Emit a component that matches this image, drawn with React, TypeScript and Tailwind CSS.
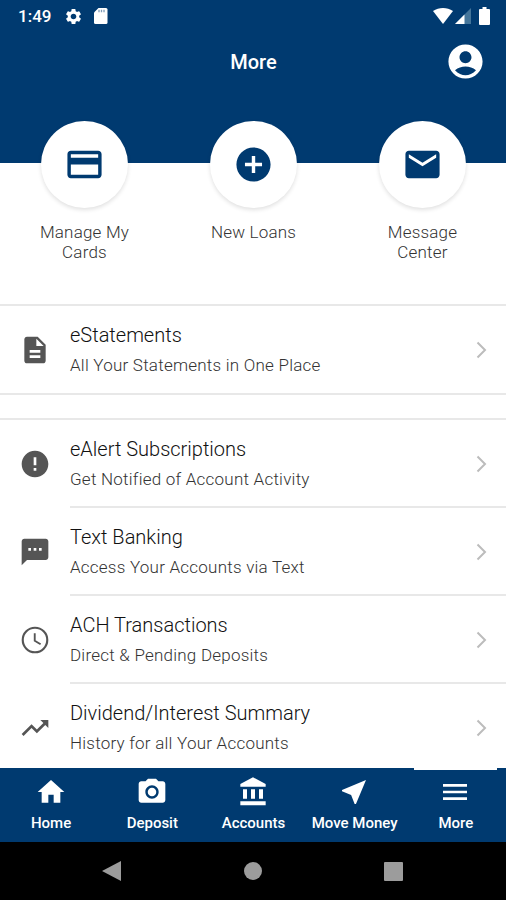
import React from "react";
import {
  MdAccountCircle,
  MdAddCircle,
  MdCreditCard,
  MdDescription,
  MdError,
  MdHome,
  MdMail,
  MdMenu,
  MdNearMe,
  MdPhotoCamera,
  MdSettings,
  MdTextsms,
  MdTrendingUp,
} from "react-icons/md";

type IconProps = { className?: string };

const BankIcon = ({ className }: IconProps) => (
  <svg className={className} viewBox="0 0 24 24" fill="currentColor">
    <path d="M12 1L2.500 6v2h19V6zM4.500 10v7h3v-7zM10.500 10v7h3v-7zM16.500 10v7h3v-7zM2.500 19v3h19v-3z" />
  </svg>
);

const ClockIcon = ({ className }: IconProps) => (
  <svg
    className={className}
    viewBox="0 0 24 24"
    fill="none"
    stroke="currentColor"
  >
    <circle cx="12" cy="12" r="9.200" strokeWidth="1.600" />
    <path d="M11.800 7v5.600l4.400 2.600" strokeWidth="1.400" />
  </svg>
);

const SdCardIcon = ({ className }: IconProps) => (
  <svg className={className} viewBox="0 0 14 16" fill="currentColor">
    <path d="M4.500 0H12a1.500 1.500 0 0 1 1.500 1.500v13A1.500 1.500 0 0 1 12 16H1.500A1.500 1.500 0 0 1 0 14.500V4.500Z" />
    <path
      d="M5 1.800v2.400M7.500 1.800v2.400M10 1.800v2.400"
      stroke="#7f9cb7"
      strokeWidth="1.300"
    />
  </svg>
);

const shortcuts = [
  { label: "Manage My Cards", icon: MdCreditCard },
  { label: "New Loans", icon: MdAddCircle },
  { label: "Message Center", icon: MdMail },
];

const services = [
  {
    title: "eAlert Subscriptions",
    text: "Get Notified of Account Activity",
    icon: MdError,
  },
  {
    title: "Text Banking",
    text: "Access Your Accounts via Text",
    icon: MdTextsms,
  },
  {
    title: "ACH Transactions",
    text: "Direct & Pending Deposits",
    icon: ClockIcon,
  },
  {
    title: "Dividend/Interest Summary",
    text: "History for all Your Accounts",
    icon: MdTrendingUp,
  },
];

const tabs = [
  { label: "Home", icon: MdHome },
  { label: "Deposit", icon: MdPhotoCamera },
  { label: "Accounts", icon: BankIcon },
  { label: "Move Money", icon: MdNearMe },
  { label: "More", icon: MdMenu },
];

const StatusBar = () => (
  <div className="flex h-8 items-center justify-between pl-[18px] pr-[16px] text-white">
    <div className="flex items-center">
      <span className="w-[36px] text-[17px] font-medium leading-8">1:49</span>
      <MdSettings className="ml-[10px] size-[19px]" />
      <SdCardIcon className="ml-[11px] h-4 w-[14px]" />
    </div>
    <div className="flex items-center">
      <svg className="h-4 w-5" viewBox="0 0 20 16">
        <path d="M0 3C6-1 14-1 20 3L10 16Z" fill="#fff" />
      </svg>
      <svg className="ml-[2px] h-4 w-4" viewBox="0 0 16 16">
        <path d="M16 0V16H0Z" fill="#44759a" />
        <path d="M9.5 6.5V16H0Z" fill="#fff" />
      </svg>
      <svg className="ml-[8px] h-[18px] w-[11px]" viewBox="0 0 11 18">
        <path
          d="M3.5 0h4v2H10a1 1 0 0 1 1 1v14a1 1 0 0 1-1 1H1a1 1 0 0 1-1-1V3a1 1 0 0 1 1-1h2.500Z"
          fill="#fff"
        />
      </svg>
    </div>
  </div>
);

type RowProps = {
  title: string;
  text: string;
  icon: React.ElementType;
  last?: boolean;
};

const Row = ({ title, text, icon: Icon, last }: RowProps) => (
  <div className="flex h-[88px] shrink-0 items-stretch">
    <div className="flex w-[70px] items-center justify-center pb-px">
      <Icon className="size-8 text-[#555555]" />
    </div>
    <div
      className={`flex flex-1 items-center justify-between pr-[19px] ${
        last ? "" : "border-b-2 border-[#e8e8e8] pt-[2px]"
      }`}
    >
      <div>
        <p className="text-[20px] font-light leading-[30px] text-[#111111]">
          {title}
        </p>
        <p className="text-[17px] font-light leading-[31px] tracking-[0.23px] text-[#333333]">
          {text}
        </p>
      </div>
      <svg
        className="h-[18px] w-[11px]"
        viewBox="0 0 11 18"
        fill="none"
        stroke="#bcbcbc"
        strokeWidth="2"
      >
        <path d="M1.500 1.500L9 9l-7.500 7.500" />
      </svg>
    </div>
  </div>
);

const App = () => {
  return (
    <div className="flex h-[900px] w-[506px] flex-col overflow-hidden bg-white font-[Roboto,sans-serif]">
      <header className="h-[163px] shrink-0 bg-[#003a70]">
        <StatusBar />
        <div className="grid h-[58px] grid-cols-3 items-center px-5 text-white">
          <h1 className="col-start-2 pl-px pt-[2px] text-center text-[20px] font-medium">
            More
          </h1>
          <MdAccountCircle className="size-[41px] justify-self-end" />
        </div>
      </header>

      <div className="-mt-[42px] -mr-px grid h-[183px] shrink-0 grid-cols-3">
        {shortcuts.map(({ label, icon: Icon }) => (
          <div key={label} className="flex flex-col items-center">
            <div className="flex size-[87px] items-center justify-center rounded-full bg-white shadow-[0_2px_4px_rgba(0,0,0,0.12)]">
              <Icon className="size-[41px] text-[#003a70]" />
            </div>
            <p className="mt-[14px] w-[110px] text-center text-[17px] font-light leading-5 tracking-[0.2px] text-[#333333]">
              {label}
            </p>
          </div>
        ))}
      </div>

      <div className="h-[91px] shrink-0 border-y-2 border-[#e8e8e8]">
        <Row
          title="eStatements"
          text="All Your Statements in One Place"
          icon={MdDescription}
          last
        />
      </div>

      <div className="mt-[23px] min-h-0 flex-1 overflow-hidden border-t-2 border-[#e8e8e8]">
        {services.map((item, index) => (
          <Row key={item.title} {...item} last={index === services.length - 1} />
        ))}
      </div>

      <nav className="grid h-[74px] shrink-0 grid-cols-5 bg-[#003a70] text-white">
        {tabs.map(({ label, icon: Icon }) => (
          <div key={label} className="flex flex-col items-center">
            <div
              className={`h-[2px] w-[83px] ${
                label === "More" ? "bg-white" : ""
              }`}
            />
            <Icon className="mt-[6px] size-8" />
            <span className="mt-[5px] whitespace-nowrap pl-px text-[15px] font-medium leading-5">
              {label}
            </span>
          </div>
        ))}
      </nav>

      <div className="flex h-[58px] shrink-0 items-center justify-between bg-black pl-[102px] pr-[103px]">
        <svg className="h-5 w-[19px]" viewBox="0 0 19 20">
          <path d="M19 0v20L0 10Z" fill="#9c9c9c" />
        </svg>
        <div className="size-[18px] rounded-full bg-[#9c9c9c]" />
        <div className="size-[19px] rounded-[1px] bg-[#9c9c9c]" />
      </div>
    </div>
  );
};

export default App;
